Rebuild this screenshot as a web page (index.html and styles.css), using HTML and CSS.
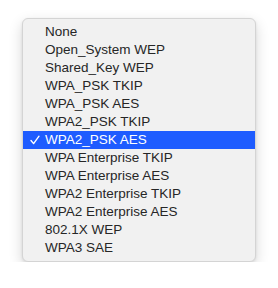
FILE: index.html
```html
<!DOCTYPE html>
<html lang="en">
<head>
    <meta charset="UTF-8">
    <meta name="viewport" content="width=device-width, initial-scale=1.0">
    <title>Security</title>
    <link rel="stylesheet" href="styles.css">
</head>
<body>
    <ul class="menu">
        <li class="item">None</li>
        <li class="item">Open_System WEP</li>
        <li class="item">Shared_Key WEP</li>
        <li class="item">WPA_PSK TKIP</li>
        <li class="item">WPA_PSK AES</li>
        <li class="item">WPA2_PSK TKIP</li>
        <li class="item selected">
            <svg class="check" width="10" height="10" viewBox="0 0 10 10">
                <polyline points="1,5.5 3.6,8.6 9,1.2" fill="none" stroke="#fff" stroke-width="1.4" stroke-linecap="round" stroke-linejoin="round"/>
            </svg>WPA2_PSK AES
        </li>
        <li class="item">WPA Enterprise TKIP</li>
        <li class="item">WPA Enterprise AES</li>
        <li class="item">WPA2 Enterprise TKIP</li>
        <li class="item">WPA2 Enterprise AES</li>
        <li class="item">802.1X WEP</li>
        <li class="item">WPA3 SAE</li>
    </ul>
</body>
</html>
```

FILE: styles.css
```css
body {
    margin: 0;
    background: #fff;
    font-family: "Liberation Sans", Arial, sans-serif;
}
.menu {
    box-sizing: border-box;
    list-style: none;
    width: 234px;
    margin: 18px 0 0 22px;
    padding: 4px 0;
    background: #f1f1f1;
    border: 1px solid #d4d4d4;
    border-radius: 6px;
    box-shadow: 0 5px 14px rgba(0, 0, 0, 0.16), 0 1px 3px rgba(0, 0, 0, 0.08);
}
.item {
    position: relative;
    height: 18px;
    line-height: 18px;
    padding-left: 22px;
    font-size: 13.5px;
    color: #262626;
}
.selected {
    background: #1e5cff;
    color: #fff;
}
.check {
    position: absolute;
    left: 7px;
    top: 4px;
}
```
